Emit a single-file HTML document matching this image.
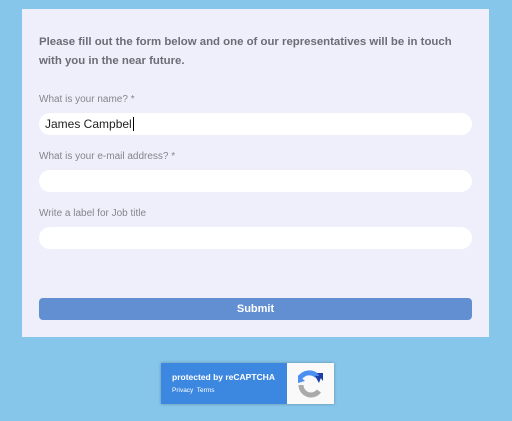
<!DOCTYPE html>
<html><head><style>
body{margin:0;width:512px;height:421px;background:#87c6eb;font-family:"Liberation Sans",sans-serif;position:relative;overflow:hidden}
.panel{position:absolute;left:22px;top:9px;width:467px;height:328px;background:#efeffb}
.intro{position:absolute;left:39px;top:33px;font-size:11.4px;font-weight:bold;color:#6c6c76;line-height:19px;width:450px;white-space:nowrap}
.lbl{position:absolute;left:39px;font-size:10px;color:#85858d}
.in{position:absolute;left:39px;width:433px;height:22px;background:#fff;border-radius:11px}
.sub{position:absolute;left:39px;top:298px;width:433px;height:22px;background:#628fd2;border-radius:4px;color:#fff;font-weight:bold;font-size:11px;text-align:center;line-height:22px}
.rc{position:absolute;left:161px;top:363px;width:173px;height:41px;background:#f9f9f9;box-shadow:0 0 3px rgba(0,0,0,.3)}
.rcb{position:absolute;left:0;top:0;width:126px;height:41px;background:#3c87e0;color:#fff}
</style></head><body>
<div class="panel"></div>
<div class="intro">Please fill out the form below and one of our representatives will be in touch<br>with you in the near future.</div>
<div class="lbl" style="top:94px">What is your name? *</div>
<div class="in" style="top:113px"><span style="position:absolute;left:6px;top:4px;font-size:12px;color:#222">James Campbel<span style="border-left:1px solid #000;margin-left:1px"></span></span></div>
<div class="lbl" style="top:151px">What is your e-mail address? *</div>
<div class="in" style="top:170px"></div>
<div class="lbl" style="top:208px">Write a label for Job title</div>
<div class="in" style="top:227px"></div>
<div class="sub">Submit</div>
<div class="rc"><div class="rcb"><div style="position:absolute;left:11px;top:9px;font-size:8.5px;font-weight:bold">protected by reCAPTCHA</div><div style="position:absolute;left:11px;top:24px;font-size:6.5px">Privacy&nbsp; Terms</div></div>
<svg style="position:absolute;left:134px;top:6px" width="30" height="30" viewBox="0 0 30 30"><path d="M5 9 A11 11 0 0 1 22 7" stroke="#4a90f0" stroke-width="5" fill="none"/><path d="M22 4 L28 4 L28 12 Z" fill="#1a3fa8"/><path d="M20 7 L27 6 L24 14 Z" fill="#1a3fa8"/><path d="M6 16 A10 10 0 0 0 24 22" stroke="#aaa" stroke-width="5" fill="none"/><path d="M3 6 L3 14 L10 12 Z" fill="#4a90f0"/></svg></div>
</body></html>
